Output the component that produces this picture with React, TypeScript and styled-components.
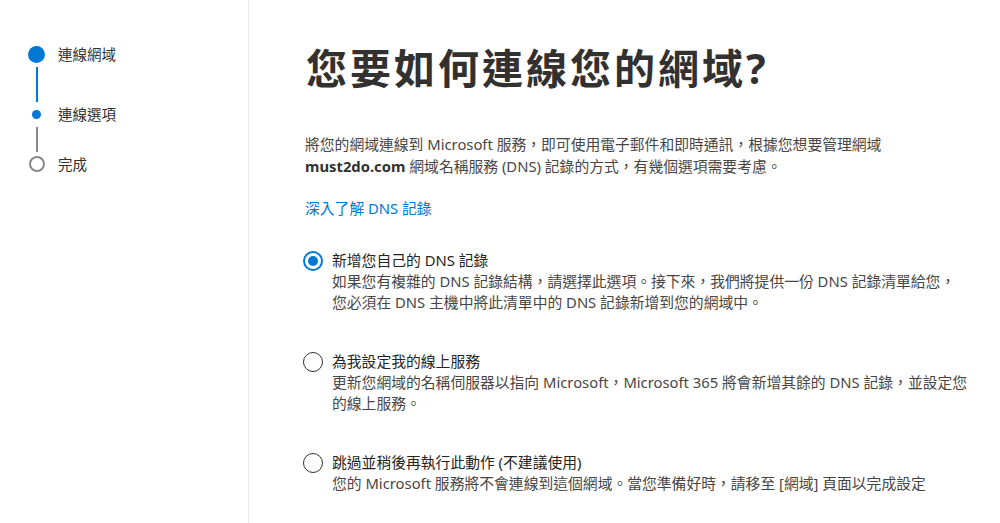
import React from "react";
import styled, { createGlobalStyle } from "styled-components";

type StepState = "done" | "current" | "todo";

type Step = {
  label: string;
  state: StepState;
};

type Option = {
  title: string;
  lines: string[];
  checked: boolean;
};

const steps: Step[] = [
  { label: "連線網域", state: "done" },
  { label: "連線選項", state: "current" },
  { label: "完成", state: "todo" },
];

const options: Option[] = [
  {
    title: "新增您自己的 DNS 記錄",
    lines: [
      "如果您有複雜的 DNS 記錄結構，請選擇此選項。接下來，我們將提供一份 DNS 記錄清單給您，",
      "您必須在 DNS 主機中將此清單中的 DNS 記錄新增到您的網域中。",
    ],
    checked: true,
  },
  {
    title: "為我設定我的線上服務",
    lines: [
      "更新您網域的名稱伺服器以指向 Microsoft，Microsoft 365 將會新增其餘的 DNS 記錄，並設定您",
      "的線上服務。",
    ],
    checked: false,
  },
  {
    title: "跳過並稍後再執行此動作 (不建議使用)",
    lines: ["您的 Microsoft 服務將不會連線到這個網域。當您準備好時，請移至 [網域] 頁面以完成設定"],
    checked: false,
  },
];

const App: React.FC = () => {
  return (
    <>
      <GlobalStyle />
      <Page>
        <Sidebar>
          {steps.map((step, i) => (
            <React.Fragment key={step.label}>
              {i > 0 && <Connector $active={i === 1} $height={i === 1 ? 35 : 25} />}
              <StepRow>
                <Indicator>
                  <StepDot $state={step.state} />
                </Indicator>
                <StepLabel>{step.label}</StepLabel>
              </StepRow>
            </React.Fragment>
          ))}
        </Sidebar>
        <Main>
          <Title>您要如何連線您的網域?</Title>
          <Intro>
            將您的網域連線到 Microsoft 服務，即可使用電子郵件和即時通訊，根據您想要管理網域
            <br />
            <strong>must2do.com</strong> 網域名稱服務 (DNS) 記錄的方式，有幾個選項需要考慮。
          </Intro>
          <LearnLink href="#">深入了解 DNS 記錄</LearnLink>
          <OptionList>
            {options.map((opt) => (
              <OptionRow key={opt.title}>
                <Radio $checked={opt.checked} />
                <OptionText>
                  <OptionTitle>{opt.title}</OptionTitle>
                  <OptionDesc>
                    {opt.lines.map((line, i) => (
                      <React.Fragment key={i}>
                        {i > 0 && <br />}
                        {line}
                      </React.Fragment>
                    ))}
                  </OptionDesc>
                </OptionText>
              </OptionRow>
            ))}
          </OptionList>
        </Main>
      </Page>
    </>
  );
};

export default App;

const GlobalStyle = createGlobalStyle`
  html, body {
    margin: 0;
    padding: 0;
    background: #fff;
  }
  body {
    font-family: "Noto Sans", "Noto Sans CJK TC", sans-serif;
    color: #323130;
  }
`;

const Page = styled.div`
  display: flex;
  min-height: 100vh;
  overflow: hidden;
`;

const Sidebar = styled.nav`
  width: 249px;
  flex-shrink: 0;
  border-right: 1px solid #ebebeb;
  padding: 45px 0 0 28px;
  box-sizing: border-box;
  display: flex;
  flex-direction: column;
`;

const StepRow = styled.div`
  display: flex;
  align-items: center;
  height: 18px;
  gap: 13px;
`;

const Indicator = styled.div`
  width: 17px;
  display: flex;
  justify-content: center;
  align-items: center;
`;

const StepDot = styled.span<{ $state: StepState }>`
  display: block;
  border-radius: 50%;
  box-sizing: border-box;
  ${({ $state }) =>
    $state === "done"
      ? "width: 17px; height: 17px; background: #0078d4;"
      : $state === "current"
      ? "width: 9px; height: 9px; background: #0078d4;"
      : "width: 16px; height: 16px; border: 2px solid #8a8886; background: #fff;"}
`;

const Connector = styled.div<{ $active: boolean; $height: number }>`
  width: 2px;
  height: ${({ $height }) => $height}px;
  margin: 4px 0 3px 7.5px;
  background: ${({ $active }) => ($active ? "#0078d4" : "#8a8886")};
`;

const StepLabel = styled.span`
  font-size: 14.5px;
  line-height: 18px;
  color: #323130;
  white-space: nowrap;
`;

const Main = styled.main`
  flex: 1;
  padding: 44px 0 0 56px;
  display: flex;
  flex-direction: column;
  align-items: flex-start;
`;

const Title = styled.h1`
  margin: 0 0 0 1px;
  font-size: 41px;
  line-height: 48px;
  font-weight: 700;
  letter-spacing: 3px;
  color: #323130;
  white-space: nowrap;
`;

const Intro = styled.p`
  margin: 41px 0 0;
  font-size: 14.8px;
  line-height: 22px;
  color: #484644;
  white-space: nowrap;

  strong {
    font-weight: 700;
    color: #323130;
  }
`;

const LearnLink = styled.a`
  margin-top: 20px;
  font-size: 14.8px;
  line-height: 22px;
  color: #0078d4;
  text-decoration: none;
`;

const OptionList = styled.div`
  margin-top: 31px;
  display: flex;
  flex-direction: column;
  gap: 38px;
`;

const OptionRow = styled.div`
  display: grid;
  grid-template-columns: 20px 1fr;
  column-gap: 9px;
  margin-left: -2px;
`;

const Radio = styled.span<{ $checked: boolean }>`
  width: 20px;
  height: 20px;
  margin-top: 0.5px;
  box-sizing: border-box;
  border-radius: 50%;
  border: ${({ $checked }) => ($checked ? "2px solid #0078d4" : "1.5px solid #323130")};
  display: flex;
  align-items: center;
  justify-content: center;

  &::after {
    content: "";
    display: ${({ $checked }) => ($checked ? "block" : "none")};
    width: 10px;
    height: 10px;
    border-radius: 50%;
    background: #0078d4;
  }
`;

const OptionText = styled.div`
  display: flex;
  flex-direction: column;
`;

const OptionTitle = styled.div`
  font-size: 14.8px;
  line-height: 21px;
  color: #252423;
  white-space: nowrap;
`;

const OptionDesc = styled.div`
  font-size: 14.8px;
  line-height: 21px;
  color: #484644;
  white-space: nowrap;
`;
